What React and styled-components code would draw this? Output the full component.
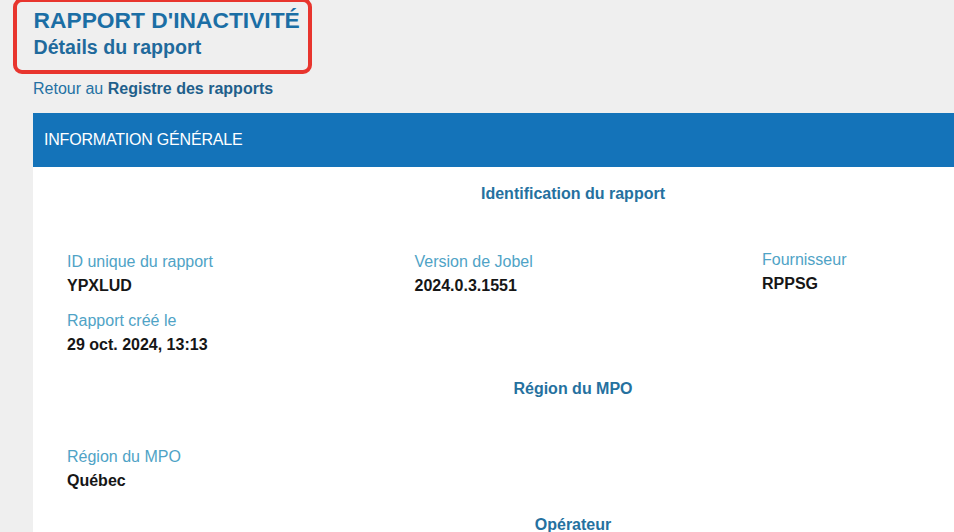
import styled, { createGlobalStyle } from "styled-components";

const GlobalStyle = createGlobalStyle`
  html, body {
    margin: 0;
    padding: 0;
    overflow: hidden;
    background: #efefef;
    font-family: "Liberation Sans", Arial, sans-serif;
  }
`;

const Page = styled.div`
  width: 1113px;
  padding: 0 0 0 33px;
  box-sizing: border-box;
`;

const TitleBox = styled.div`
  margin: -2px 0 0 -20px;
  width: 299px;
  box-sizing: border-box;
  border: 4.5px solid #e8352e;
  border-radius: 9px;
  padding: 4.5px 0 11.5px 16.5px;
`;

const Title = styled.h1`
  margin: 0;
  font-size: 22.8px;
  line-height: 26px;
  font-weight: bold;
  color: #1b6ea5;
`;

const Subtitle = styled.h2`
  margin: 2px 0 0;
  font-size: 19.6px;
  line-height: 24px;
  font-weight: bold;
  color: #1f6a9c;
`;

const BackLink = styled.p`
  margin: 5px 0 14px;
  font-size: 16px;
  line-height: 20px;
  color: #2471a3;

  & b {
    color: #1f5f8b;
  }
`;

const Bar = styled.div`
  height: 54px;
  display: flex;
  align-items: center;
  padding-left: 11px;
  background: #1473b9;
  color: #fff;
  font-size: 16px;
  letter-spacing: -0.2px;
`;

const Panel = styled.div`
  background: #fff;
  padding: 17px 0 40px 34px;
  min-height: 400px;
`;

const Section = styled.section`
  margin-bottom: 22px;
`;

const SectionTitle = styled.h3`
  margin: 0 0 46px -34px;
  text-align: center;
  font-size: 16px;
  line-height: 20px;
  font-weight: bold;
  color: #25719f;
`;

const Grid = styled.div`
  display: grid;
  grid-template-columns: repeat(3, 347.5px);
  row-gap: 11px;
`;

const Field = styled.div`
  display: flex;
  flex-direction: column;
  margin-top: ${(p) => (p.$lift ? "-2px" : "0")};
`;

const Label = styled.span`
  font-size: 16px;
  line-height: 24px;
  color: #4fa3c6;
`;

const Value = styled.span`
  font-size: 16px;
  line-height: 24px;
  font-weight: bold;
  color: #161616;
`;

const sections = [
  {
    title: "Identification du rapport",
    fields: [
      { label: "ID unique du rapport", value: "YPXLUD" },
      { label: "Version de Jobel", value: "2024.0.3.1551" },
      { label: "Fournisseur", value: "RPPSG", lift: true },
      { label: "Rapport créé le", value: "29 oct. 2024, 13:13" },
    ],
  },
  {
    title: "Région du MPO",
    fields: [{ label: "Région du MPO", value: "Québec" }],
  },
  {
    title: "Opérateur",
    fields: [],
  },
];

export default function App() {
  return (
    <>
      <GlobalStyle />
      <Page>
        <TitleBox>
          <Title>RAPPORT D'INACTIVITÉ</Title>
          <Subtitle>Détails du rapport</Subtitle>
        </TitleBox>
        <BackLink>
          Retour au <b>Registre des rapports</b>
        </BackLink>
        <Bar>INFORMATION GÉNÉRALE</Bar>
        <Panel>
          {sections.map((s) => (
            <Section key={s.title}>
              <SectionTitle>{s.title}</SectionTitle>
              {s.fields.length > 0 && (
                <Grid>
                  {s.fields.map((f) => (
                    <Field key={f.label} $lift={f.lift}>
                      <Label>{f.label}</Label>
                      <Value>{f.value}</Value>
                    </Field>
                  ))}
                </Grid>
              )}
            </Section>
          ))}
        </Panel>
      </Page>
    </>
  );
}
